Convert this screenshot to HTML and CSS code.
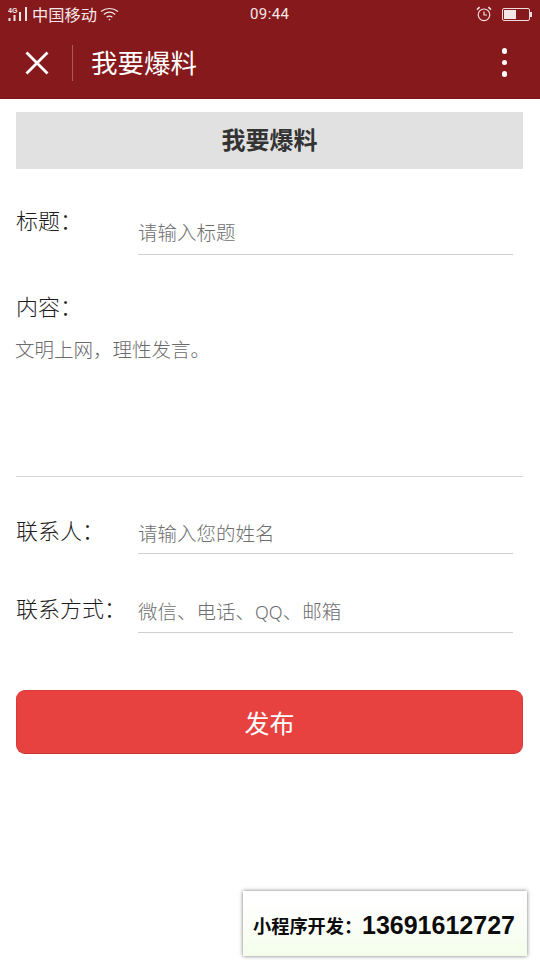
FILE: index.html
```html
<!DOCTYPE html>
<html lang="zh">
<head>
<meta charset="utf-8">
<title>我要爆料</title>
<link rel="stylesheet" href="styles.css">
</head>
<body>
<header class="chrome">
  <div class="status">
    <div class="status-left">
      <svg class="signal" width="24" height="16" viewBox="0 0 24 16">
        <text x="0" y="7" class="net">4G</text>
        <rect x="0.5" y="12" width="2" height="3" fill="#f3e6e6"/>
        <rect x="5.5" y="9" width="2" height="6" fill="#f3e6e6"/>
        <rect x="11" y="6" width="2" height="9" fill="#f3e6e6"/>
        <rect x="17" y="1" width="2" height="14" fill="#f3e6e6"/>
      </svg>
      <span class="carrier">中国移动</span>
      <svg class="wifi" width="19" height="14" viewBox="0 0 19 14" fill="none" stroke="#f3e6e6" stroke-width="1.2">
        <path d="M1 4.5C6 .5 13 .5 18 4.5"/>
        <path d="M3.8 7.4C7.2 4.8 11.8 4.8 15.2 7.4"/>
        <path d="M6.6 10.2C8.4 8.9 10.6 8.9 12.4 10.2"/>
        <circle cx="9.5" cy="12.6" r=".8" fill="#f3e6e6" stroke="none"/>
      </svg>
    </div>
    <span class="time">09:44</span>
    <div class="status-right">
      <svg width="16" height="16" viewBox="0 0 16 16" fill="none" stroke="#f3dede" stroke-width="1.2">
        <circle cx="8" cy="8.8" r="5.8"/>
        <path d="M8 5.5V9H11"/>
        <path d="M1 3.6L3.6 1.2M15 3.6L12.4 1.2" stroke-width="1.6"/>
      </svg>
      <div class="battery"><div class="battery-fill"></div></div>
    </div>
  </div>
  <div class="nav">
    <svg class="close" width="24" height="24" viewBox="0 0 24 24" fill="none" stroke="#fff" stroke-width="2.8">
      <path d="M1.5 1.5L22.5 22.5M22.5 1.5L1.5 22.5"/>
    </svg>
    <span class="divider"></span>
    <h1 class="nav-title">我要爆料</h1>
    <div class="more"><i></i><i></i><i></i></div>
  </div>
</header>

<main class="page">
  <h2 class="banner">我要爆料</h2>
  <div class="field field-title">
    <label class="label">标题：</label>
    <div class="input">请输入标题</div>
  </div>
  <div class="content-block">
    <div class="label">内容：</div>
    <div class="textarea">文明上网，理性发言。</div>
  </div>
  <div class="field field-name">
    <label class="label">联系人：</label>
    <div class="input">请输入您的姓名</div>
  </div>
  <div class="field field-contact">
    <label class="label">联系方式：</label>
    <div class="input">微信、电话、<span class="latin">QQ</span>、邮箱</div>
  </div>
  <button class="submit">发布</button>
</main>

<aside class="promo"><span class="promo-label">小程序开发：</span><span class="promo-phone">13691612727</span></aside>
</body>
</html>
```
FILE: styles.css
```css
* { box-sizing: border-box; }
html, body { margin: 0; padding: 0; }
body {
  width: 540px;
  height: 960px;
  position: relative;
  overflow: hidden;
  background: #fff;
  font-family: "Noto Sans CJK SC", "Noto Sans", sans-serif;
  font-weight: 300;
  color: #333;
}
.chrome {
  height: 99px;
  background: #86191c;
  border-bottom: 1px solid #7a1216;
  color: #fff;
}
.status {
  height: 28px;
  padding: 0 8px;
  display: flex;
  align-items: center;
  justify-content: space-between;
  position: relative;
  color: #f5e6e6;
}
.status-left { display: flex; align-items: center; }
.net { font: bold 7px "Liberation Sans", sans-serif; fill: #f3e6e6; }
.carrier { font-size: 16.25px; line-height: 20px; font-weight: 400; }
.wifi { margin-left: 3px; }
.time {
  position: absolute;
  left: 250px;
  top: 4px;
  font: 400 15px/20px "Roboto", sans-serif;
  letter-spacing: .4px;
}
.status-right { display: flex; align-items: center; gap: 10px; padding-right: 2px; }
.battery {
  width: 28px;
  height: 13px;
  border: 1px solid #f0dcdc;
  border-radius: 2px;
  padding: 1px;
  position: relative;
}
.battery::after {
  content: "";
  position: absolute;
  right: -3px;
  top: 3px;
  width: 2px;
  height: 5px;
  background: #f0dcdc;
}
.battery-fill { width: 12px; height: 100%; background: #f3e6e6; }
.nav {
  height: 70px;
  display: flex;
  align-items: center;
  padding-left: 25px;
  position: relative;
}
.close { flex: none; }
.divider { width: 1px; height: 36px; background: #a85a5c; margin-left: 23px; }
.nav-title {
  margin: -2px 0 0 18px;
  font-size: 26.5px;
  line-height: 36px;
  font-weight: 400;
}
.more {
  position: absolute;
  right: 33px;
  top: 20px;
  display: flex;
  flex-direction: column;
  gap: 6px;
}
.more i { display: block; width: 5.5px; height: 5.5px; border-radius: 50%; background: #fff; }
.page { padding: 13px 17px 0 16px; }
.banner {
  margin: 0;
  height: 57px;
  line-height: 53px;
  background: #e1e1e1;
  text-align: center;
  font-size: 24px;
  font-weight: 700;
  color: #333;
}
.field { display: flex; align-items: flex-start; padding-right: 10px; }
.label { width: 122px; flex: none; font-size: 22px; line-height: 30px; color: #1c1c1c; }
.input {
  flex: 1;
  height: 43px;
  line-height: 42px;
  font-size: 19.5px;
  color: #6e6e6e;
  border-bottom: 1px solid #d0d0d0;
}
.latin { font-family: "Noto Sans", sans-serif; font-size: 18px; }
.field-title { margin-top: 43px; height: 46px; }
.field-title .label { margin-top: -8px; }
.field-title .input { line-height: 40px; }
.content-block {
  margin-top: 32px;
  height: 187px;
  border-bottom: 1px solid #d8d8d8;
}
.content-block .label { width: auto; }
.textarea {
  margin: 14px 0 0 -1px;
  font-size: 19.5px;
  line-height: 30px;
  color: #6a6a6a;
}
.field-name { margin-top: 34px; height: 43px; }
.field-name .label { margin-top: 3px; }
.field-name .input { line-height: 43px; }
.field-contact { margin-top: 36px; height: 43px; }
.field-contact .label { margin-top: 2px; }
.submit {
  display: block;
  width: 100%;
  height: 64px;
  margin-top: 57px;
  background: #e84240;
  border: 1px solid #d93a3a;
  border-bottom-color: #c93636;
  border-radius: 9px;
  color: #fff;
  font-family: inherit;
  font-weight: 400;
  font-size: 25px;
  line-height: 1;
}
.promo {
  position: absolute;
  left: 243px;
  top: 891px;
  width: 284px;
  height: 65px;
  background: linear-gradient(#fff 20%, #f4fdea);
  box-shadow: 0 0 4px rgba(0, 0, 0, .55);
  display: flex;
  align-items: center;
  padding: 3px 0 0 10px;
  color: #0c0c0c;
  font-weight: 700;
}
.promo-label { font-size: 18.2px; white-space: nowrap; width: 109px; flex: none; }
.promo-phone { font: bold 25px "Liberation Sans", sans-serif; }
```
